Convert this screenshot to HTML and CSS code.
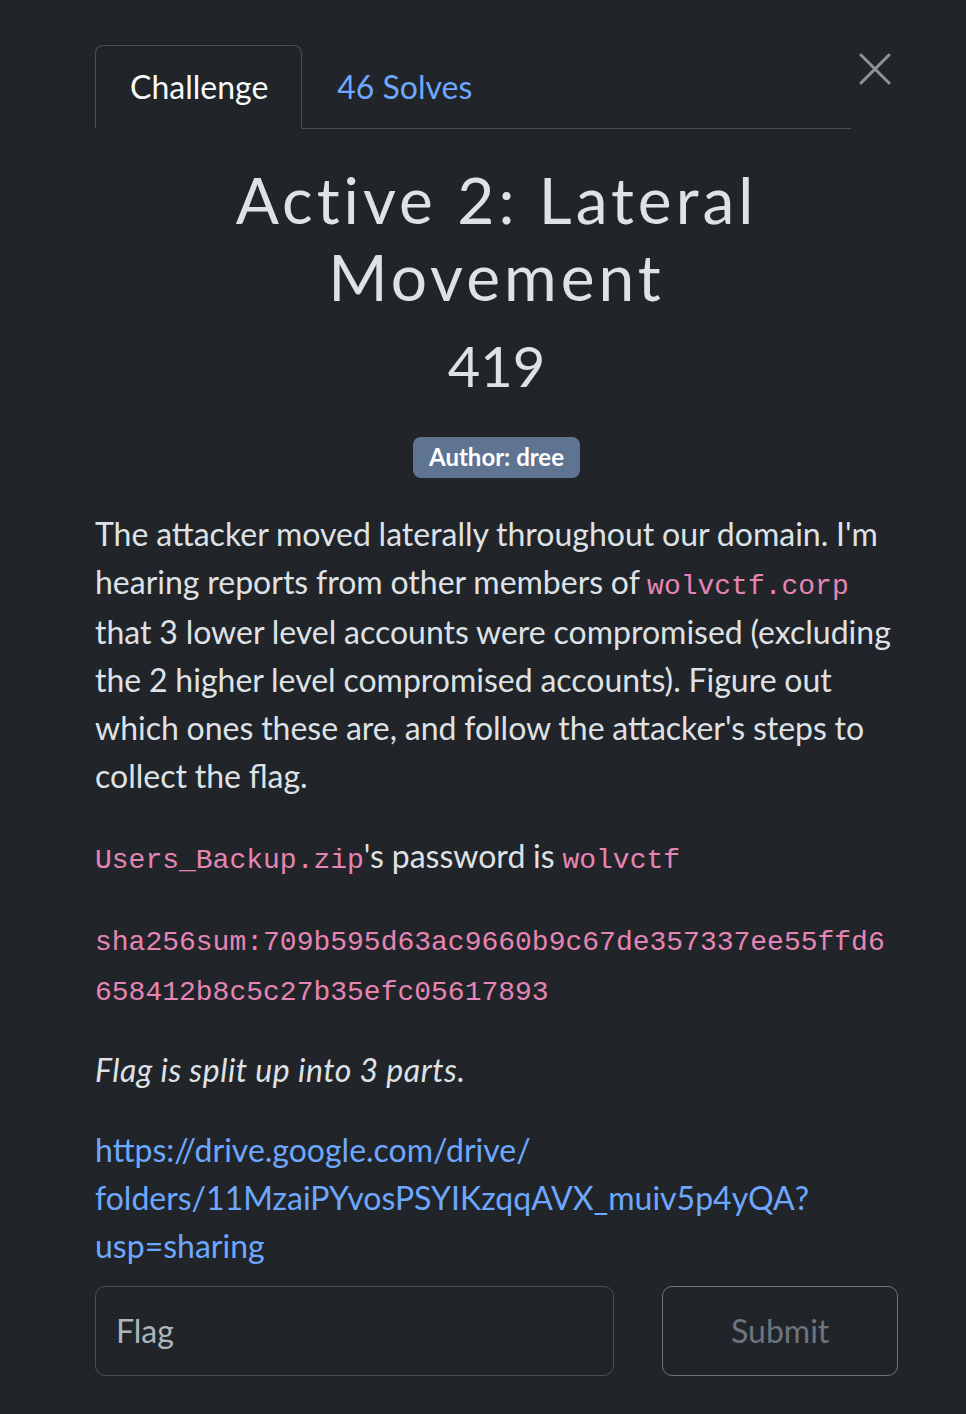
FILE: index.html
```html
<!DOCTYPE html>
<html lang="en">
<head>
<meta charset="utf-8">
<title>Active 2: Lateral Movement</title>
<link rel="stylesheet" href="styles.css">
</head>
<body>
<div class="modal-body">
  <div class="header">
    <ul class="nav-tabs">
      <li class="nav-item"><span class="nav-link active">Challenge</span></li>
      <li class="nav-item"><span class="nav-link">46 Solves</span></li>
    </ul>
    <button class="btn-close" aria-label="Close">
      <svg viewBox="0 0 32 32" width="32" height="32"><path d="M2 2 L30 30 M30 2 L2 30" stroke="#909294" stroke-width="3" stroke-linecap="round" fill="none"/></svg>
    </button>
  </div>

  <h2 class="challenge-name">Active 2: Lateral Movement</h2>
  <h3 class="challenge-value">419</h3>
  <div class="challenge-tags"><span class="badge">Author: dree</span></div>

  <div class="challenge-desc">
    <p>The attacker moved laterally throughout our domain. I'm hearing reports from other members of <code>wolvctf.corp</code> that 3 lower level accounts were compromised (excluding the 2 higher level compromised accounts). Figure out which ones these are, and follow the attacker's steps to collect the flag.</p>
    <p><code>Users_Backup.zip</code>'s password is <code>wolvctf</code></p>
    <p><code>sha256sum:709b595d63ac9660b9c67de357337ee55ffd6658412b8c5c27b35efc05617893</code></p>
    <p><em>Flag is split up into 3 parts.</em></p>
    <p class="last"><a href="#">https://drive.google.com/drive/<wbr>folders/11MzaiPYvosPSYIKzqqAVX_muiv5p4yQA?<wbr>usp=sharing</a></p>
  </div>

  <div class="submit-row">
    <input class="form-control" type="text" placeholder="Flag">
    <button class="btn-submit">Submit</button>
  </div>
</div>
</body>
</html>
```

FILE: styles.css
```css
* { box-sizing: border-box; }

html, body {
  margin: 0;
  padding: 0;
  background: #212529;
}

body {
  font-family: Lato, "Noto Sans", sans-serif;
  font-size: 32px;
  line-height: 1.5;
  color: #dee2e6;
}

.modal-body {
  padding: 45px 68px 0 95px;
}

.header {
  display: flex;
  align-items: flex-start;
}

.nav-tabs {
  flex: 1;
  display: flex;
  list-style: none;
  margin: 0;
  padding: 0;
  border-bottom: 1px solid #495057;
}

.nav-item {
  margin-bottom: -1px;
}

.nav-link {
  display: block;
  padding: 17px 33px 17px 34px;
  border: 1px solid transparent;
  border-top-left-radius: 8px;
  border-top-right-radius: 8px;
  color: #6ea8fe;
}

.nav-link.active {
  color: #f8f9fa;
  background: #212529;
  border-color: #495057 #495057 #212529;
}

.btn-close {
  width: 32px;
  height: 32px;
  margin: 8px 7px 0 8px;
  padding: 0;
  border: 0;
  background: transparent;
  display: flex;
}

.challenge-name {
  margin: 0 0 16px;
  padding-top: 33px;
  text-align: center;
  font-size: 64px;
  font-weight: 400;
  line-height: 1.2;
  letter-spacing: 4px;
  color: #dee2e6;
}

.challenge-value {
  margin: 0;
  text-align: center;
  font-size: 56px;
  font-weight: 400;
  line-height: 1.2;
  color: #dee2e6;
}

.challenge-tags {
  display: flex;
  justify-content: center;
  margin-top: 38px;
  margin-bottom: 32px;
}

.badge {
  display: inline-block;
  padding: 8.4px 15.6px;
  font-size: 24px;
  font-weight: 700;
  line-height: 1;
  color: #fff;
  background: #5e7491;
  border-radius: 8px;
}

.challenge-desc {
  word-spacing: -0.4px;
}

.challenge-desc p {
  margin: 0 0 32px;
}

.challenge-desc p.last {
  margin-bottom: 16px;
}

.challenge-desc em {
  letter-spacing: 0.55px;
}

code {
  font-family: "Liberation Mono", monospace;
  font-size: 28px;
  color: #e685b5;
  overflow-wrap: break-word;
  word-spacing: 0;
}

a {
  color: #6ea8fe;
  text-decoration: none;
}

.submit-row {
  display: grid;
  grid-template-columns: calc((100% + 48px) * 8 / 12 - 48px) 1fr;
  gap: 48px;
}

.form-control {
  height: 90px;
  padding: 0 20px;
  font-family: Lato, "Noto Sans", sans-serif;
  font-size: 32px;
  color: #dee2e6;
  background: #212529;
  border: 1px solid #495057;
  border-radius: 10px;
  outline: none;
}

.form-control::placeholder {
  color: #adb5bd;
}

.btn-submit {
  height: 90px;
  font-family: Lato, "Noto Sans", sans-serif;
  font-size: 32px;
  color: #6c757d;
  background: transparent;
  border: 1px solid #6c757d;
  border-radius: 10px;
}
```
